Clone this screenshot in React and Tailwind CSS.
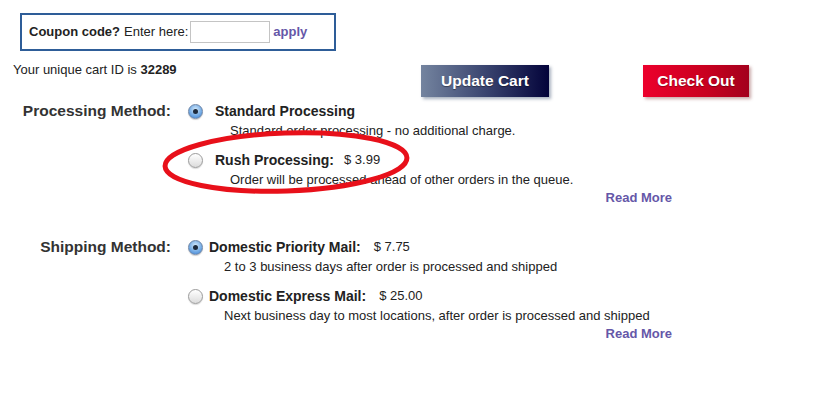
import { useState } from "react";

function Radio({ checked }) {
    if (checked) {
        return (
            <span className="flex items-center justify-center w-[15px] h-[15px] rounded-full border border-[#6f86a6] bg-[radial-gradient(circle_at_50%_35%,#d6ebfb,#6fa8e4_60%,#3b7dd0)] shadow-[0_1px_1px_rgba(0,0,0,0.2)]">
                <span className="w-[5px] h-[5px] rounded-full bg-[#1d2a3c]"></span>
            </span>
        );
    }
    return (
        <span className="block w-[15px] h-[15px] rounded-full border border-[#9b9b9b] bg-[linear-gradient(#ffffff,#dcdcdc)] shadow-[0_1px_1px_rgba(0,0,0,0.15)]"></span>
    );
}

function Option({ checked, title, price, desc, gap, priceGap, indent, first }) {
    return (
        <div className={first ? "" : "mt-[10px]"}>
            <div className="flex items-center h-[20px]">
                <Radio checked={checked} />
                <span className={`${gap} text-[14px] font-bold text-[#222]`}>{title}</span>
                {price && <span className={`${priceGap} text-[13px] text-[#222]`}>{price}</span>}
            </div>
            <div className={`${indent} mt-[1px] text-[13px] leading-[18px] text-[#222]`}>{desc}</div>
        </div>
    );
}

export default function App() {
    const [coupon, setCoupon] = useState("");

    return (
        <div className="w-[821px] h-[400px] bg-white font-['Liberation_Sans',Arial,sans-serif] text-[#222] overflow-hidden">
            <div className="pt-[13px] pl-[20px]">
                <div className="flex items-center w-[316px] h-[38px] border-2 border-[#2e5d98] pl-[7px] text-[13px]">
                    <span className="font-bold">Coupon code?</span>
                    <span className="ml-[4px]">Enter here:</span>
                    <input type="text" value={coupon} onChange={(e) => setCoupon(e.target.value)} className="ml-[2px] w-[80px] h-[22px] border border-[#c4c4c4] bg-white outline-none" />
                    <span className="ml-[3px] font-bold text-[#6557a8]">apply</span>
                </div>
            </div>

            <div className="flex items-start mt-[11px]">
                <div className="w-[421px] pl-[13px] text-[13px] leading-[16px]">
                    Your unique cart ID is <span className="font-bold">32289</span>
                </div>
                <button className="mt-[3px] w-[128px] h-[32px] bg-[linear-gradient(90deg,#74849f,#3a4570_50%,#03033a)] text-white text-[15.5px] font-bold shadow-[2px_2px_3px_rgba(60,80,110,0.45)] [text-shadow:0_1px_1px_rgba(0,0,0,0.4)]">
                    Update Cart
                </button>
                <button className="ml-[94px] mt-[3px] w-[106px] h-[32px] bg-[linear-gradient(90deg,#ec002c,#c8001f_60%,#a3001d)] text-white text-[15.5px] font-bold shadow-[2px_2px_3px_rgba(120,40,40,0.4)] [text-shadow:0_1px_1px_rgba(0,0,0,0.35)]">
                    Check Out
                </button>
            </div>

            <div className="relative flex mt-[4px]">
                <div className="w-[171px] h-[20px] flex items-center justify-end text-[15.5px] font-bold text-[#333]">Processing Method:</div>
                <div className="ml-[17px] w-[484px]">
                    <Option first checked title="Standard Processing" desc="Standard order processing - no additional charge." gap="ml-[12px]" indent="ml-[42px]" />
                    <Option title="Rush Processing:" price="$ 3.99" priceGap="ml-[10px]" desc="Order will be processed ahead of other orders in the queue." gap="ml-[12px]" indent="ml-[42px]" />
                    <div className="text-right text-[13px] font-bold leading-[18px] text-[#6557a8]">Read More</div>
                </div>
                <svg className="absolute left-[160px] top-[27px]" width="252" height="68" viewBox="0 0 252 68">
                    <ellipse cx="126" cy="34" rx="121" ry="29" fill="none" stroke="#e8101a" strokeWidth="5" transform="rotate(-2 126 34)" />
                </svg>
            </div>

            <div className="flex mt-[30px]">
                <div className="w-[171px] h-[20px] flex items-center justify-end text-[15.5px] font-bold text-[#333]">Shipping Method:</div>
                <div className="ml-[17px] w-[484px]">
                    <Option first checked title="Domestic Priority Mail:" price="$ 7.75" priceGap="ml-[13px]" desc="2 to 3 business days after order is processed and shipped" gap="ml-[6px]" indent="ml-[36px]" />
                    <Option title="Domestic Express Mail:" price="$ 25.00" priceGap="ml-[13px]" desc="Next business day to most locations, after order is processed and shipped" gap="ml-[6px]" indent="ml-[36px]" />
                    <div className="text-right text-[13px] font-bold leading-[18px] text-[#6557a8]">Read More</div>
                </div>
            </div>
        </div>
    );
}
